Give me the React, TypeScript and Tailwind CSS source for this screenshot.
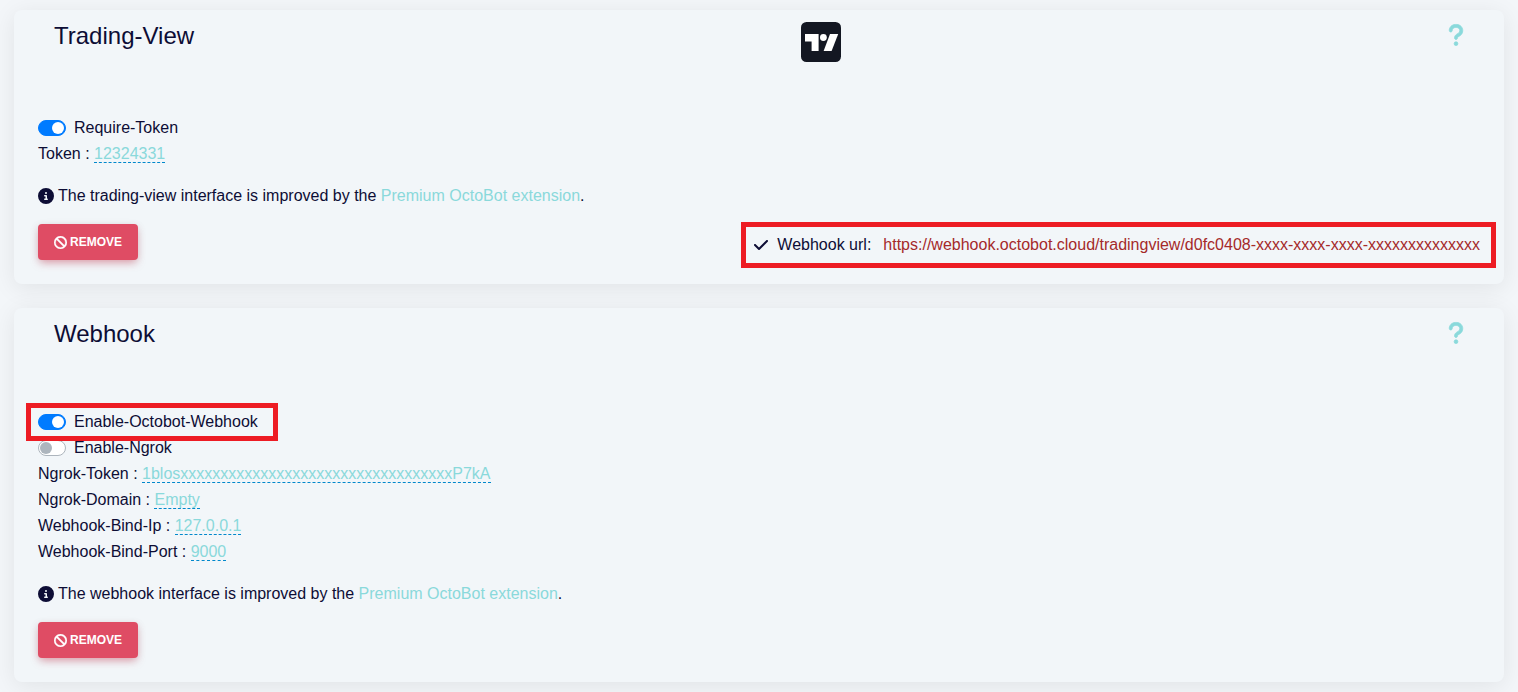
import { useState, type ReactNode } from "react";
import { FaBan, FaCheck, FaCircleInfo, FaQuestion } from "react-icons/fa6";

function TradingViewLogo() {
  return (
    <svg viewBox="0 0 40 40" className="size-10" role="img" aria-label="TradingView">
      <rect width="40" height="40" rx="5.5" fill="#131722" />
      <path d="M4 12h13.6v17h-7v-9.4H4z" fill="#fff" />
      <circle cx="22.4" cy="15.5" r="3.4" fill="#fff" />
      <path d="M29 12H37.2L30.6 29H22.6z" fill="#fff" />
    </svg>
  );
}

function Switch({ label, initial, highlighted }: { label: string; initial: boolean; highlighted?: boolean }) {
  const [on, setOn] = useState(initial);
  return (
    <div className="flex">
      <label className="relative flex h-[26px] cursor-pointer items-center gap-2">
        <input
          type="checkbox"
          checked={on}
          onChange={() => setOn(!on)}
          className="flex h-4 w-7 appearance-none items-center rounded-full border border-[#adb5bd] bg-white px-px before:size-3 before:rounded-full before:bg-[#adb5bd] checked:justify-end checked:border-[#007bff] checked:bg-[#007bff] checked:before:bg-white"
        />
        {label}
        {highlighted && (
          <span className="pointer-events-none absolute -top-1.5 -right-5 -bottom-1.5 -left-3 z-10 border-5 border-[#ed1c24]" />
        )}
      </label>
    </div>
  );
}

function Field({ name, value }: { name: string; value: string }) {
  return (
    <div className="leading-[26px]">
      {name} :{" "}
      <a href="#edit" className="border-b border-dashed border-[#0088cc] text-[#8ad9db]">
        {value}
      </a>
    </div>
  );
}

type ServiceCardProps = {
  title: string;
  noun: string;
  logo?: ReactNode;
  status?: ReactNode;
  children: ReactNode;
};

function ServiceCard({ title, noun, logo, status, children }: ServiceCardProps) {
  return (
    <section className="rounded-lg bg-[#f2f6f9] px-6 pt-3 pb-6 shadow-[0_4px_24px_rgba(0,0,0,0.08)]">
      <header className="grid min-h-9 grid-cols-2 pr-3 pl-4">
        <h2 className="text-2xl leading-7">{title}</h2>
        <div className="flex items-start justify-between pl-10">
          <div>{logo}</div>
          <a href="#help" aria-label={`${title} help`} className="pt-px text-[#8ad9db]">
            <FaQuestion className="size-6 stroke-current stroke-[16px]" />
          </a>
        </div>
      </header>
      <div className="mt-[53px]">{children}</div>
      <p className="mt-[17px] flex items-center gap-1 leading-6">
        <FaCircleInfo className="size-4" />
        <span>
          The {noun} interface is improved by the{" "}
          <a href="#premium" className="text-[#8ad9db]">
            Premium OctoBot extension
          </a>
          .
        </span>
      </p>
      <div className="mt-4 flex items-start justify-between">
        <button
          type="button"
          className="flex h-9 items-center gap-[3px] rounded-sm bg-[#df4c64] px-4 text-xs font-bold text-white uppercase shadow-[0_4px_8px_-2px_rgba(223,76,100,0.5),0_2px_8px_rgba(0,0,0,0.1)]"
        >
          <FaBan className="size-[13px] stroke-current stroke-[12px]" />
          Remove
        </button>
        {status}
      </div>
    </section>
  );
}

function WebhookUrl() {
  return (
    <div className="pt-2">
      <div className="relative flex items-center leading-[26px]">
        <FaCheck className="mr-2 size-4" />
        <span className="mr-3">Webhook url:</span>
        <span className="text-[#a52a2a]">
          https://webhook.octobot.cloud/tradingview/d0fc0408-xxxx-xxxx-xxxx-xxxxxxxxxxxxxx
        </span>
        <span className="pointer-events-none absolute -top-2.5 -right-4 -bottom-2.5 -left-3 border-5 border-[#ed1c24]" />
      </div>
    </div>
  );
}

export default function App() {
  return (
    <main className="flex min-h-screen flex-col gap-6 bg-[#f3f6f9] px-3.5 py-2.5 font-['Liberation_Sans',Arial,sans-serif] text-base text-[#0d0d35]">
      <ServiceCard title="Trading-View" noun="trading-view" logo={<TradingViewLogo />} status={<WebhookUrl />}>
        <Switch label="Require-Token" initial />
        <Field name="Token" value="12324331" />
      </ServiceCard>
      <ServiceCard title="Webhook" noun="webhook">
        <Switch label="Enable-Octobot-Webhook" initial highlighted />
        <Switch label="Enable-Ngrok" initial={false} />
        <Field name="Ngrok-Token" value="1blosxxxxxxxxxxxxxxxxxxxxxxxxxxxxxxxxxxP7kA" />
        <Field name="Ngrok-Domain" value="Empty" />
        <Field name="Webhook-Bind-Ip" value="127.0.0.1" />
        <Field name="Webhook-Bind-Port" value="9000" />
      </ServiceCard>
    </main>
  );
}
